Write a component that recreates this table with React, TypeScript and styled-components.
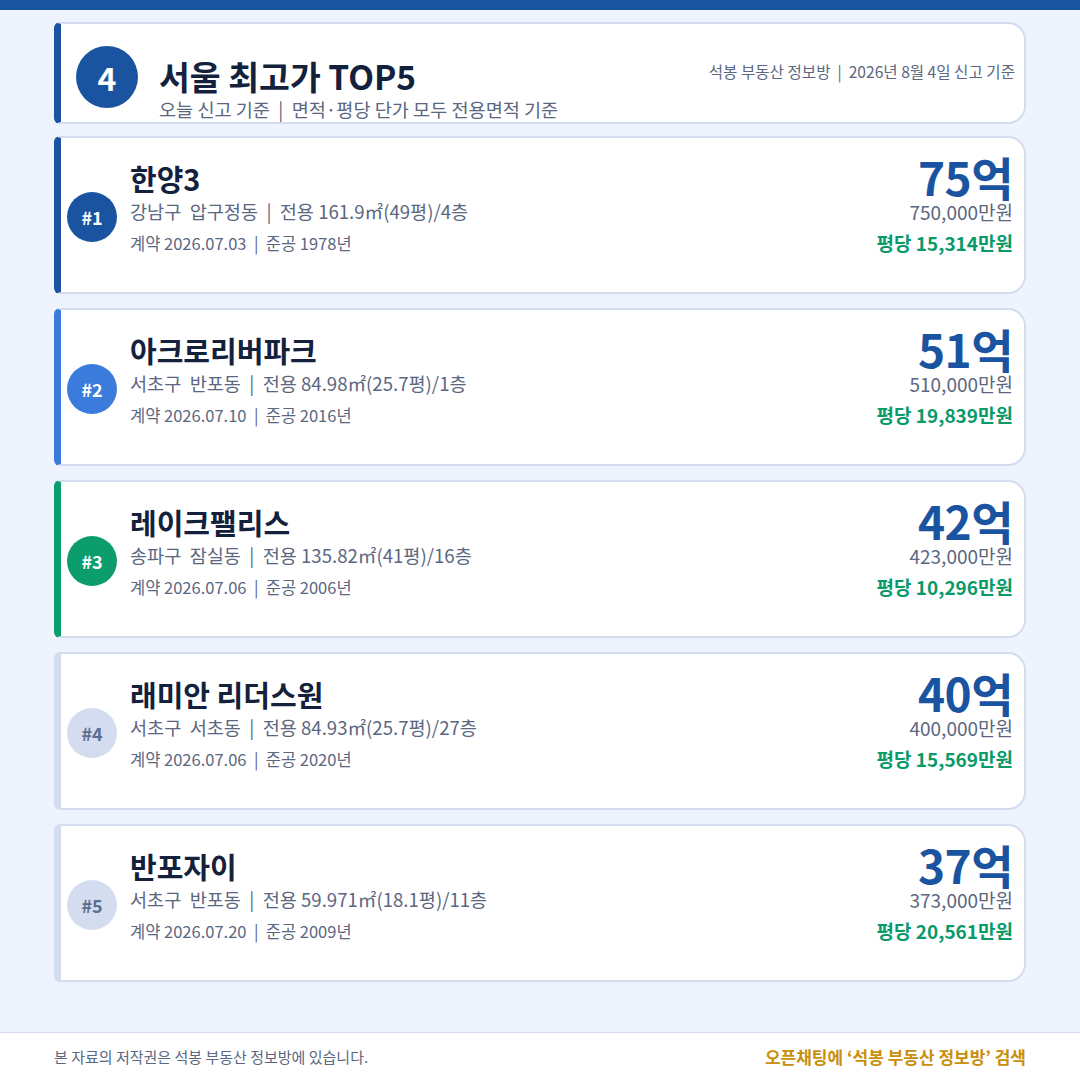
import styled, { createGlobalStyle } from 'styled-components';

const GlobalStyle = createGlobalStyle`
  * { box-sizing: border-box; }
  html, body {
    margin: 0;
    padding: 0;
    background: #eef3fd;
    font-family: 'Noto Sans CJK KR', 'Noto Sans', sans-serif;
  }
`;

const Page = styled.div`
  width: 1080px;
  height: 1080px;
  display: flex;
  flex-direction: column;
  background: #eef3fd;
  border-top: 10px solid #1a54a0;
`;

const Main = styled.main`
  flex: 1;
  display: flex;
  flex-direction: column;
  gap: 14px;
  padding: 12px 54px 0;
`;

const HeaderCard = styled.section`
  height: 102px;
  display: flex;
  align-items: flex-start;
  background: #fff;
  border: 2px solid #d3ddef;
  border-left: 7px solid #1a54a0;
  border-radius: 6px 18px 18px 6px;
  padding: 0 9px 0 15px;
  margin-bottom: -2px;
`;

const StepCircle = styled.div`
  width: 62px;
  height: 62px;
  border-radius: 50%;
  background: #1a54a0;
  color: #fff;
  font-size: 32px;
  font-weight: 700;
  display: flex;
  align-items: center;
  justify-content: center;
  margin-top: 22px;
  flex-shrink: 0;
`;

const TitleBlock = styled.div`
  display: flex;
  flex-direction: column;
  margin-left: 21px;
  padding-top: 32px;
  flex: 1;
  white-space: pre;
`;

const Title = styled.h1`
  margin: 0;
  font-size: 33.5px;
  line-height: 40px;
  font-weight: 700;
  color: #14213d;
`;

const Subtitle = styled.div`
  font-size: 18.6px;
  line-height: 26px;
  color: #5b6781;
`;

const Source = styled.div`
  font-size: 15.6px;
  line-height: 20px;
  color: #5b6781;
  margin-top: 37px;
  white-space: pre;
`;

const Card = styled.article<{ $accent: string }>`
  height: 158px;
  display: grid;
  grid-template-columns: 50px 1fr auto;
  column-gap: 13px;
  align-items: start;
  background: #fff;
  border: 2px solid #d3ddef;
  border-left: 7px solid ${({ $accent }) => $accent};
  border-radius: 6px 18px 18px 6px;
  padding: 0 11px 0 6px;
`;

const Rank = styled.div<{ $bg: string; $fg: string }>`
  align-self: center;
  margin-top: 4px;
  width: 50px;
  height: 50px;
  border-radius: 50%;
  background: ${({ $bg }) => $bg};
  color: ${({ $fg }) => $fg};
  font-size: 18px;
  font-weight: 700;
  display: flex;
  align-items: center;
  justify-content: center;
`;

const Info = styled.div`
  display: flex;
  flex-direction: column;
  padding-top: 23px;
  white-space: pre;
`;

const Name = styled.div`
  font-size: 29px;
  line-height: 34px;
  font-weight: 700;
  color: #14213d;
`;

const Spec = styled.div`
  font-size: 18.6px;
  line-height: 32px;
  color: #5b6781;
`;

const Meta = styled.div`
  font-size: 16.5px;
  line-height: 32px;
  color: #5b6781;
`;

const PriceBlock = styled.div`
  display: flex;
  flex-direction: column;
  align-items: flex-end;
  padding-top: 13px;
  white-space: pre;
`;

const Price = styled.div`
  font-size: 46px;
  line-height: 50px;
  font-weight: 700;
  color: #1a54a0;
  letter-spacing: -0.5px;
`;

const Manwon = styled.div`
  font-size: 19px;
  line-height: 22px;
  color: #5b6781;
`;

const PerPyeong = styled.div`
  font-size: 19px;
  line-height: 40px;
  font-weight: 700;
  color: #0a9a6a;
`;

const Footer = styled.footer`
  height: 48px;
  flex-shrink: 0;
  background: #fff;
  border-top: 1px solid #d3ddef;
  display: flex;
  align-items: center;
  justify-content: space-between;
  padding: 0 54px;
`;

const Copyright = styled.div`
  font-size: 15px;
  color: #5b6781;
`;

const Cta = styled.div`
  font-size: 17px;
  font-weight: 700;
  color: #c8900a;
`;

type Deal = {
  rank: number;
  name: string;
  spec: string;
  meta: string;
  price: string;
  manwon: string;
  perPyeong: string;
};

const deals: Deal[] = [
  {
    rank: 1,
    name: '한양3',
    spec: '강남구  압구정동  |  전용 161.9㎡(49평)/4층',
    meta: '계약 2026.07.03  |  준공 1978년',
    price: '75억',
    manwon: '750,000만원',
    perPyeong: '평당 15,314만원',
  },
  {
    rank: 2,
    name: '아크로리버파크',
    spec: '서초구  반포동  |  전용 84.98㎡(25.7평)/1층',
    meta: '계약 2026.07.10  |  준공 2016년',
    price: '51억',
    manwon: '510,000만원',
    perPyeong: '평당 19,839만원',
  },
  {
    rank: 3,
    name: '레이크팰리스',
    spec: '송파구  잠실동  |  전용 135.82㎡(41평)/16층',
    meta: '계약 2026.07.06  |  준공 2006년',
    price: '42억',
    manwon: '423,000만원',
    perPyeong: '평당 10,296만원',
  },
  {
    rank: 4,
    name: '래미안 리더스원',
    spec: '서초구  서초동  |  전용 84.93㎡(25.7평)/27층',
    meta: '계약 2026.07.06  |  준공 2020년',
    price: '40억',
    manwon: '400,000만원',
    perPyeong: '평당 15,569만원',
  },
  {
    rank: 5,
    name: '반포자이',
    spec: '서초구  반포동  |  전용 59.971㎡(18.1평)/11층',
    meta: '계약 2026.07.20  |  준공 2009년',
    price: '37억',
    manwon: '373,000만원',
    perPyeong: '평당 20,561만원',
  },
];

const rankColors: Record<number, { accent: string; fg: string }> = {
  1: { accent: '#1a54a0', fg: '#fff' },
  2: { accent: '#3a7bdc', fg: '#fff' },
  3: { accent: '#0b9e6c', fg: '#fff' },
  4: { accent: '#d3ddef', fg: '#5d6f8f' },
  5: { accent: '#d3ddef', fg: '#5d6f8f' },
};

const App = () => {
  return (
    <Page>
      <GlobalStyle />
      <Main>
        <HeaderCard>
          <StepCircle>4</StepCircle>
          <TitleBlock>
            <Title>서울 최고가 TOP5</Title>
            <Subtitle>오늘 신고 기준  |  면적·평당 단가 모두 전용면적 기준</Subtitle>
          </TitleBlock>
          <Source>석봉 부동산 정보방  |  2026년 8월 4일 신고 기준</Source>
        </HeaderCard>
        {deals.map((d) => {
          const c = rankColors[d.rank];
          return (
            <Card key={d.rank} $accent={c.accent}>
              <Rank $bg={c.accent} $fg={c.fg}>
                #{d.rank}
              </Rank>
              <Info>
                <Name>{d.name}</Name>
                <Spec>{d.spec}</Spec>
                <Meta>{d.meta}</Meta>
              </Info>
              <PriceBlock>
                <Price>{d.price}</Price>
                <Manwon>{d.manwon}</Manwon>
                <PerPyeong>{d.perPyeong}</PerPyeong>
              </PriceBlock>
            </Card>
          );
        })}
      </Main>
      <Footer>
        <Copyright>본 자료의 저작권은 석봉 부동산 정보방에 있습니다.</Copyright>
        <Cta>오픈채팅에 ‘석봉 부동산 정보방’ 검색</Cta>
      </Footer>
    </Page>
  );
};

export default App;
